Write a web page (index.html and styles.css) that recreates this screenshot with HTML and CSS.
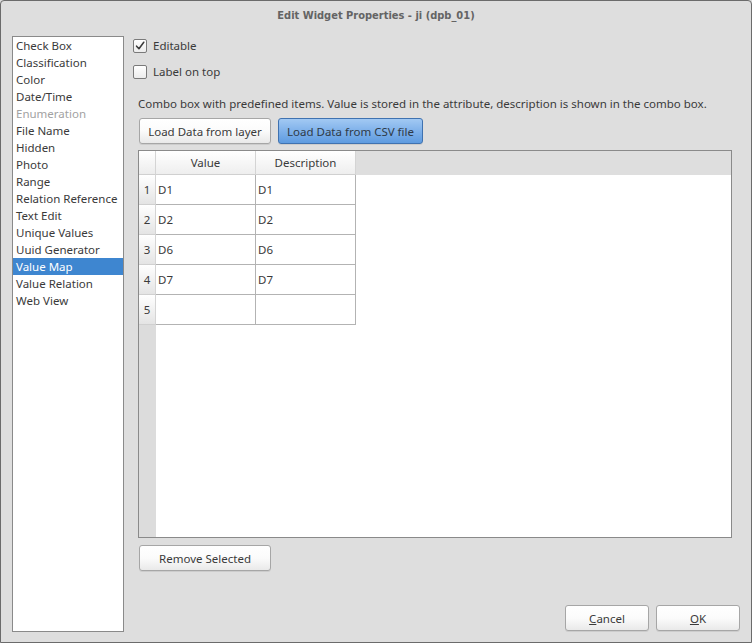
FILE: index.html
```html
<!DOCTYPE html>
<html>
<head>
<meta charset="utf-8">
<link rel="stylesheet" href="styles.css">
</head>
<body>
<div class="window">
  <div class="titlebar">Edit Widget Properties - ji (dpb_01)</div>
  <div class="main">
    <ul class="typelist">
      <li>Check Box</li>
      <li>Classification</li>
      <li>Color</li>
      <li>Date/Time</li>
      <li class="disabled">Enumeration</li>
      <li>File Name</li>
      <li>Hidden</li>
      <li>Photo</li>
      <li>Range</li>
      <li>Relation Reference</li>
      <li>Text Edit</li>
      <li>Unique Values</li>
      <li>Uuid Generator</li>
      <li class="selected">Value Map</li>
      <li>Value Relation</li>
      <li>Web View</li>
    </ul>
    <div class="panel">
      <label class="check first">
        <span class="box"><svg width="14" height="14" viewBox="0 0 14 14"><path d="M3 7.2 L5.8 10.2 L11.4 2.6" fill="none" stroke="#3a3a3a" stroke-width="1.8" stroke-linecap="round" stroke-linejoin="round"/></svg></span>
        <span>Editable</span>
      </label>
      <label class="check second">
        <span class="box"></span>
        <span>Label on top</span>
      </label>
      <div class="desc">Combo box with predefined items. Value is stored in the attribute, description is shown in the combo box.</div>
      <div class="btnrow">
        <button class="btn w132">Load Data from layer</button>
        <button class="btn blue w145">Load Data from CSV file</button>
      </div>
      <div class="grid">
        <div class="hcorner"></div>
        <div class="hcell">Value</div>
        <div class="hcell">Description</div>
        <div class="hfill"></div>

        <div class="rh">1</div><div class="cell">D1</div><div class="cell">D1</div><div class="fill"></div>
        <div class="rh">2</div><div class="cell">D2</div><div class="cell">D2</div><div class="fill"></div>
        <div class="rh">3</div><div class="cell">D6</div><div class="cell">D6</div><div class="fill"></div>
        <div class="rh">4</div><div class="cell">D7</div><div class="cell">D7</div><div class="fill"></div>
        <div class="rh">5</div><div class="cell"></div><div class="cell"></div><div class="fill"></div>

        <div class="rhfill"></div><div class="bodyfill"></div>
      </div>
      <div class="removerow">
        <button class="btn w132">Remove Selected</button>
      </div>
      <div class="footer">
        <button class="btn w84"><u>C</u>ancel</button>
        <button class="btn w84"><u>O</u>K</button>
      </div>
    </div>
  </div>
</div>
</body>
</html>
```
FILE: styles.css
```css
html, body {
  margin: 0;
  padding: 0;
  background: #dedede;
}
body {
  font-family: "Noto Sans", "Open Sans", sans-serif;
  font-size: 11.5px;
  color: #3a3a3a;
}
.window {
  box-sizing: border-box;
  width: 752px;
  height: 643px;
  border: 1px solid #6b6b6b;
  border-radius: 4px 4px 0 0;
  background: #dedede;
  display: flex;
  flex-direction: column;
}
.titlebar {
  height: 29px;
  line-height: 29px;
  text-align: center;
  font-family: "DejaVu Sans Condensed", "DejaVu Sans", sans-serif;
  font-stretch: condensed;
  font-weight: bold;
  font-size: 11px;
  color: #646464;
  flex: none;
}
.main {
  flex: 1;
  display: flex;
  padding: 6px 11px 10px 11px;
  gap: 9px;
  min-height: 0;
}
.typelist {
  list-style: none;
  margin: 0;
  padding: 0;
  width: 110px;
  flex: none;
  background: #fff;
  border: 1px solid #8a8a8a;
}
.typelist li {
  height: 17px;
  line-height: 17px;
  padding-left: 3px;
  white-space: nowrap;
}
.typelist li.disabled {
  color: #a2a2a2;
}
.typelist li.selected {
  background: #3e86d0;
  color: #fff;
}
.panel {
  flex: 1;
  display: flex;
  flex-direction: column;
  min-width: 0;
}
.check {
  display: flex;
  align-items: center;
  height: 19px;
  gap: 6px;
}
.check.second {
  margin-top: 7px;
}
.box {
  box-sizing: border-box;
  width: 14px;
  height: 14px;
  border: 1px solid #7a7a7a;
  border-radius: 2px;
  background: linear-gradient(#ffffff, #ececec);
  display: flex;
  align-items: center;
  justify-content: center;
}
.box svg {
  display: block;
}
.desc {
  margin-top: 14px;
  margin-left: 5px;
  height: 17px;
  line-height: 17px;
  white-space: nowrap;
}
.btnrow {
  margin-top: 6px;
  margin-left: 6px;
  display: flex;
  gap: 7px;
}
.btn {
  box-sizing: border-box;
  height: 26px;
  padding: 0;
  font-family: inherit;
  font-size: 11.5px;
  color: #3a3a3a;
  border: 1px solid #a6a6a6;
  border-radius: 3px;
  background: linear-gradient(#ffffff 0%, #fbfbfb 50%, #e9e9e9 100%);
  box-shadow: 0 1px 0 rgba(0,0,0,0.08);
}
.btn.blue {
  background: linear-gradient(#a2c9f3 0%, #7fb1ea 50%, #5e9be0 100%);
  border-color: #3f72b0;
  color: #2e3a48;
}
.w132 { width: 132px; }
.w145 { width: 145px; }
.w84 { width: 84px; }
.grid {
  margin-top: 6px;
  margin-left: 5px;
  margin-right: 8px;
  flex: 1;
  min-height: 0;
  border: 1px solid #8a8a8a;
  background: #fff;
  display: grid;
  grid-template-columns: 17px 100px 100px 1fr;
  grid-template-rows: 24px repeat(5, 30px) 1fr;
}
.hcorner {
  box-sizing: border-box;
  border-right: 1px solid #d4d4d4;
  border-bottom: 1px solid #d0d0d0;
  background: linear-gradient(#ffffff, #ececec);
}
.hcell {
  box-sizing: border-box;
  border-right: 1px solid #d4d4d4;
  border-bottom: 1px solid #d0d0d0;
  background: linear-gradient(#ffffff, #eeeeee);
  text-align: center;
  line-height: 23px;
}
.hfill {
  background: #dedede;
}
.rh {
  box-sizing: border-box;
  border-right: 1px solid #d4d4d4;
  border-bottom: 1px solid #d0d0d0;
  background: linear-gradient(#ffffff, #e4e4e4);
  text-align: center;
  line-height: 29px;
}
.cell {
  box-sizing: border-box;
  border-right: 1px solid #b3b3b3;
  border-bottom: 1px solid #b3b3b3;
  padding-left: 2px;
  line-height: 29px;
}
.fill {
  background: #fff;
}
.rhfill {
  background: #dcdcdc;
}
.bodyfill {
  grid-column: 2 / 5;
  background: #fff;
}
.removerow {
  margin-top: 7px;
  margin-left: 6px;
  display: flex;
}
.footer {
  margin-top: 34px;
  margin-bottom: 1px;
  display: flex;
  justify-content: flex-end;
  gap: 7px;
}
```
